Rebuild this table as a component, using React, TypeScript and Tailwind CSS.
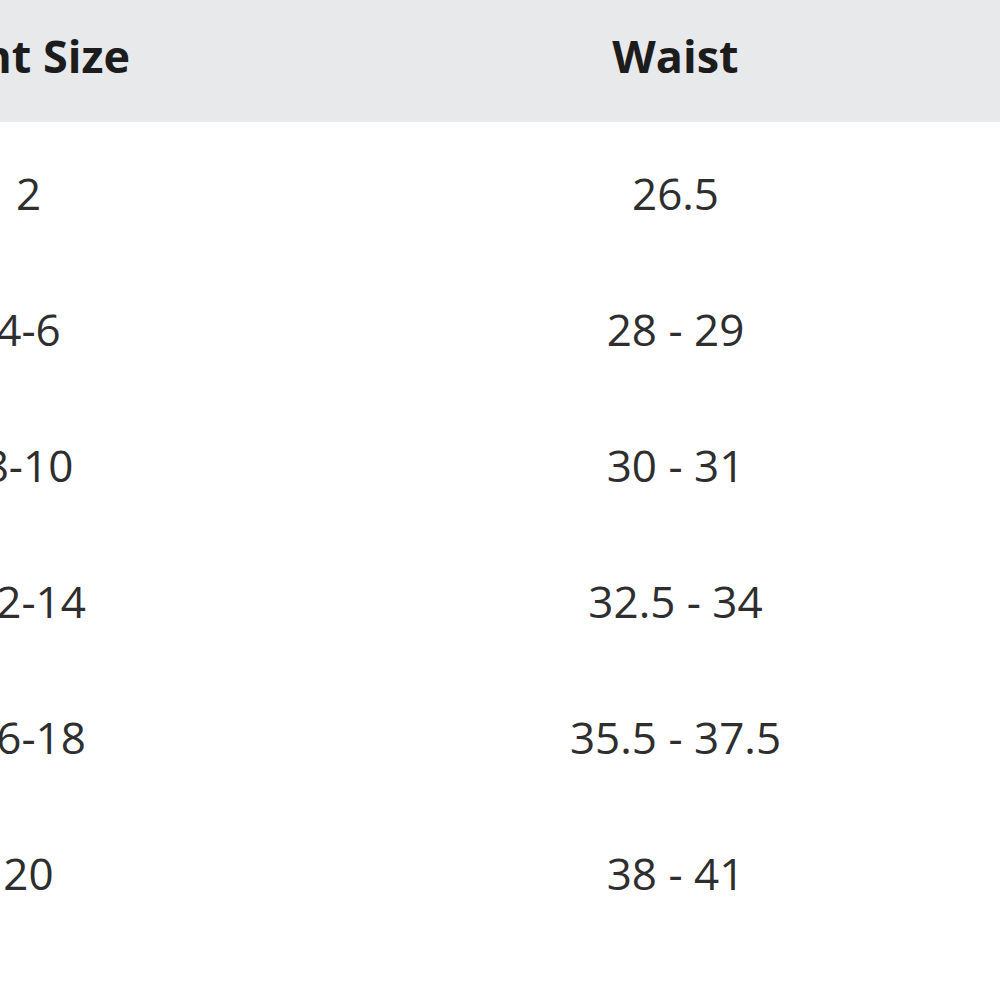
const rows = [
  ['2', '26.5', '36'],
  ['4-6', '28 - 29', '38 - 39'],
  ['8-10', '30 - 31', '40 - 41'],
  ['12-14', '32.5 - 34', '42.5 - 44'],
  ['16-18', '35.5 - 37.5', '45.5 - 47.5'],
  ['20', '38 - 41', '48 - 51'],
];

const App = () => {
  return (
    <div className="h-[1000px] w-[1000px] overflow-hidden bg-white font-['Open_Sans',sans-serif]">
      <div className="-ml-[295px] w-[1941px]">
        <div className="grid h-[122px] grid-cols-3 items-center bg-[#e8e9eb] pb-[10px] text-[45px] font-bold text-[#1c1c1c]">
          <div className="text-center">Pant Size</div>
          <div className="text-center">Waist</div>
          <div className="text-center">Hip</div>
        </div>
        {rows.map((row) => (
          <div
            key={row[0]}
            className="grid h-[136px] grid-cols-3 items-center pt-[6px] text-[44px] text-[#2e2e2e]"
          >
            {row.map((cell, i) => (
              <div key={i} className="text-center">
                {cell}
              </div>
            ))}
          </div>
        ))}
      </div>
    </div>
  );
};

export default App;
